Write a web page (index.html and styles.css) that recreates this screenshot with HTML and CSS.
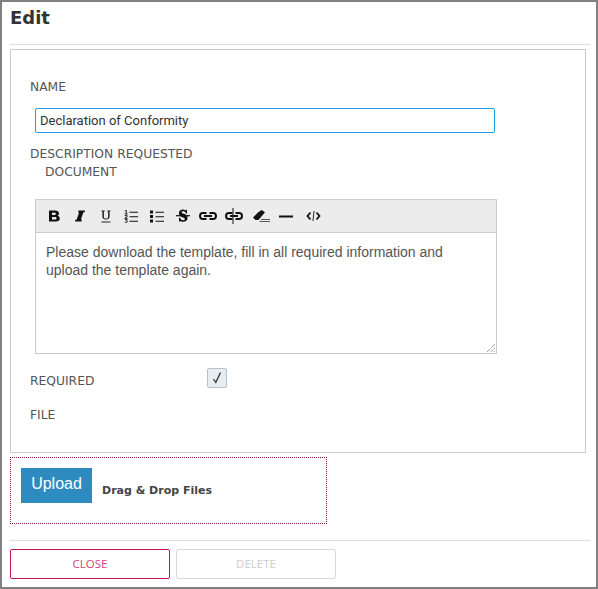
FILE: index.html
```html
<!DOCTYPE html>
<html lang="en">
<head>
<meta charset="utf-8">
<title>Edit</title>
<link rel="stylesheet" href="styles.css">
</head>
<body>
<div class="dialog">
  <h1 class="title">Edit</h1>
  <div class="rule rule-top"></div>
  <section class="panel">
    <div class="label label-name">NAME</div>
    <div class="field">Declaration of Conformity</div>
    <div class="label label-desc">DESCRIPTION REQUESTED DOCUMENT</div>
    <div class="editor">
      <div class="toolbar">
        <svg class="ico i-b" viewBox="0 0 11 12"><path d="M0 .5h6c2.500 0 4 1 4 2.900 0 1.100-.6 1.900-1.700 2.300 1.600.3 2.500 1.300 2.500 2.800 0 2.100-1.500 3-4.100 3H0z M3 2.700v2.200h2.600c.9 0 1.300-.4 1.300-1.100s-.4-1.100-1.300-1.100z M3 6.900v2.500h3c1 0 1.500-.4 1.500-1.250S7 6.900 6 6.900z" fill="#111" fill-rule="evenodd"/></svg>
        <svg class="ico i-italic" viewBox="0 0 10 12"><path d="M3.500.5H10l-.4 1.800-1.300.3L5.900 9.400l1 .3-.4 1.800H0l.4-1.800 1.300-.3 2.400-6.800-1-.3z" fill="#111"/></svg>
        <svg class="ico i-u" viewBox="0 0 10 13"><path d="M.5.500h3.300v.7l-.9.2v5c0 1.500.7 2.200 2.100 2.200s2.100-.7 2.100-2.200v-5l-.9-.2V.500h3.300v.7l-.9.2v5.100c0 2-1.300 3-3.600 3S1.400 8.500 1.400 6.500V1.400l-.9-.2z M.5 11.600h9v1h-9z" fill="#222"/></svg>
        <svg class="ico i-ol" viewBox="0 0 14 13"><path d="M.8 1l1.500-.6V4M.7 4h3M.8 5.600h2.300v1.200L.8 8.300h2.600M.8 9.300h2.500L2 10.600c1 0 1.500.3 1.500.9s-.6 1-2.700.8" fill="none" stroke="#111" stroke-width=".9"/><path d="M5.500 2.300H14M5.500 6.800H14M5.500 11.300H14" stroke="#111" stroke-width="1.100"/></svg>
        <svg class="ico i-ul" viewBox="0 0 14 13"><path d="M0 .5h3v3H0zM0 5h3v3H0zM0 9.500h3v3H0z" fill="#111"/><path d="M5.500 2.300H14M5.500 6.800H14M5.500 11.300H14" stroke="#111" stroke-width="1.100"/></svg>
        <svg class="ico i-s" viewBox="0 0 14 14"><path d="M11 .8v3.700h-1C9.500 3 8.500 2.300 7.200 2.300c-1 0-1.600.4-1.600 1 0 1.900 6 1.200 6 5.400 0 2.500-1.900 4.100-4.400 4.100-1.100 0-2-.3-2.800-.9l-.5.7H3V8.700h1.100c.5 1.700 1.600 2.500 3 2.500 1 0 1.700-.5 1.700-1.300C8.800 7.900 2.900 8.600 2.900 4.200 2.900 2 4.600.6 7 .6c1 0 1.800.3 2.400.8L10 .8z" fill="#111"/><path d="M0 6.700h14" stroke="#111" stroke-width="1.200"/></svg>
        <svg class="ico i-link" viewBox="0 0 18 8"><path d="M7.500 1H4a3 3 0 0 0 0 6h3.500M10.500 1H14a3 3 0 0 1 0 6h-3.500M5 4h8" fill="none" stroke="#111" stroke-width="2"/></svg>
        <svg class="ico i-unlink" viewBox="0 0 18 16"><path d="M7.500 5H4a3 3 0 0 0 0 6h3.500M10.500 5H14a3 3 0 0 1 0 6h-3.500M5 8h8" fill="none" stroke="#111" stroke-width="2"/><path d="M8 0v16" stroke="#111"/></svg>
        <svg class="ico i-eraser" viewBox="0 0 17 12"><path d="M5.500 2l3.200-2L12 2.200 5.500 10H2.500L0 7.500z" fill="#111"/><path d="M8 9.500h9M6.500 11.500H17" stroke="#333" stroke-width=".8"/></svg>
        <svg class="ico i-hr" viewBox="0 0 14 3"><path d="M0 1.500h14" stroke="#111" stroke-width="2"/></svg>
        <svg class="ico i-code" viewBox="0 0 15 10"><path d="M4.500 1.500L1.500 5l3 3.500M10.500 1.500L13.500 5l-3 3.500" fill="none" stroke="#111" stroke-width="1.800"/><path d="M8 0L7 10" stroke="#111" stroke-width=".9"/></svg>
      </div>
      <div class="editor-body">Please download the template, fill in all required information and upload the template again.
        <svg class="grip" viewBox="0 0 9 9"><path d="M0 9L9 0M4 9L9 4M7.500 9L9 7.500" stroke="#555" stroke-width="1" stroke-dasharray="1 1"/></svg>
      </div>
    </div>
    <div class="row-required">
      <div class="label label-req">REQUIRED</div>
      <div class="checkbox"><svg class="tick" viewBox="0 0 12 14"><path d="M2.500 8l2.300 3.500L9.500 1.500" fill="none" stroke="#333" stroke-width="1.300"/></svg></div>
    </div>
    <div class="label label-file">FILE</div>
  </section>
  <section class="dropzone">
    <div class="upload">Upload</div>
    <div class="drop-text">Drag &amp; Drop Files</div>
  </section>
  <div class="rule rule-bottom"></div>
  <div class="actions">
    <div class="btn btn-close">CLOSE</div>
    <div class="btn btn-delete">DELETE</div>
  </div>
</div>
</body>
</html>
```
FILE: styles.css
```css
* { box-sizing: border-box; }
html, body { margin: 0; padding: 0; background: #fff; }
body { width: 598px; height: 589px; overflow: hidden; }
.dialog {
  width: 598px;
  height: 589px;
  border: 2px solid #808080;
  padding: 0 6px 0 8px;
  display: flex;
  flex-direction: column;
}
.title {
  margin: 0;
  height: 42px;
  padding-top: 5px;
  font: bold 18px/22px "DejaVu Sans", sans-serif;
  color: #333;
}
.rule { height: 1px; background: #ddd; flex: none; }
.panel {
  margin-top: 4px;
  width: 576px;
  height: 404px;
  flex: none;
  border: 1px solid #ccc;
  padding: 0 0 0 19px;
}
.label {
  font: 12.300px/18px "DejaVu Sans", sans-serif;
  color: #555;
}
.label-name { margin-top: 28px; }
.field {
  margin: 12px 0 0 5px;
  width: 460px;
  height: 25px;
  border: 1px solid #1ba1e2;
  border-radius: 2px;
  padding-left: 4px;
  font: 13px/24px Roboto, "Liberation Sans", sans-serif;
  color: #333;
}
.label-desc {
  margin-top: 12px;
  width: 180px;
  padding-left: 15px;
  text-indent: -15px;
}
.editor {
  margin: 18px 0 0 5px;
  width: 462px;
  height: 155px;
  border: 1px solid #ccc;
  display: flex;
  flex-direction: column;
}
.toolbar {
  height: 33px;
  flex: none;
  background: #ececec;
  border-bottom: 1px solid #ccc;
  display: flex;
  align-items: center;
  padding-left: 13px;
}
.ico { display: block; flex: none; }
.i-b { width: 11px; height: 12px; }
.i-italic { width: 10px; height: 12px; margin-left: 15px; }
.i-u { width: 10px; height: 13px; margin-left: 16px; }
.i-ol { width: 14px; height: 13px; margin-left: 13px; }
.i-ul { width: 14px; height: 13px; margin-left: 12px; }
.i-s { width: 14px; height: 14px; margin-left: 12px; }
.i-link { width: 18px; height: 8px; margin-left: 9px; }
.i-unlink { width: 18px; height: 16px; margin-left: 8px; }
.i-eraser { width: 17px; height: 12px; margin-left: 10px; }
.i-hr { width: 14px; height: 3px; margin-left: 9px; }
.i-code { width: 15px; height: 10px; margin-left: 13px; }
.editor-body {
  flex: 1;
  position: relative;
  padding: 10px 10px 0;
  font: 14px/18px "Liberation Sans", sans-serif;
  color: #555;
}
.grip { position: absolute; right: 1px; bottom: 1px; width: 8px; height: 8px; }
.row-required {
  display: flex;
  margin-top: 14px;
  height: 33px;
}
.label-req { width: 177px; padding-top: 4px; }
.checkbox {
  width: 20px;
  height: 20px;
  border: 1px solid #b9c3cc;
  border-radius: 2px;
  background: #e8edf1;
  display: flex;
  align-items: center;
  justify-content: center;
}
.tick { width: 12px; height: 14px; }
.label-file { margin-top: 5px; }
.dropzone {
  margin-top: 4px;
  width: 317px;
  height: 67px;
  flex: none;
  border: 1px dotted #7a1c4a;
  padding: 10px;
  display: flex;
  gap: 10px;
}
.upload {
  width: 71px;
  height: 35px;
  background: #2e8bc0;
  color: #fff;
  text-align: center;
  font: 16px/32px "Liberation Sans", sans-serif;
}
.drop-text {
  font: bold 11px/14px "DejaVu Sans", sans-serif;
  color: #444;
  padding-top: 16px;
}
.rule-bottom { margin-top: 16px; width: 580px; }
.actions { margin-top: 8px; display: flex; gap: 6px; }
.btn {
  width: 160px;
  height: 30px;
  border-radius: 2px;
  background: #fff;
  text-align: center;
  font: 11.500px/28px "Open Sans", "Noto Sans", sans-serif;
}
.btn-close { border: 1px solid #c8115f; color: #d6407f; }
.btn-delete { border: 1px solid #d8d8d8; color: #ccc; }
```
